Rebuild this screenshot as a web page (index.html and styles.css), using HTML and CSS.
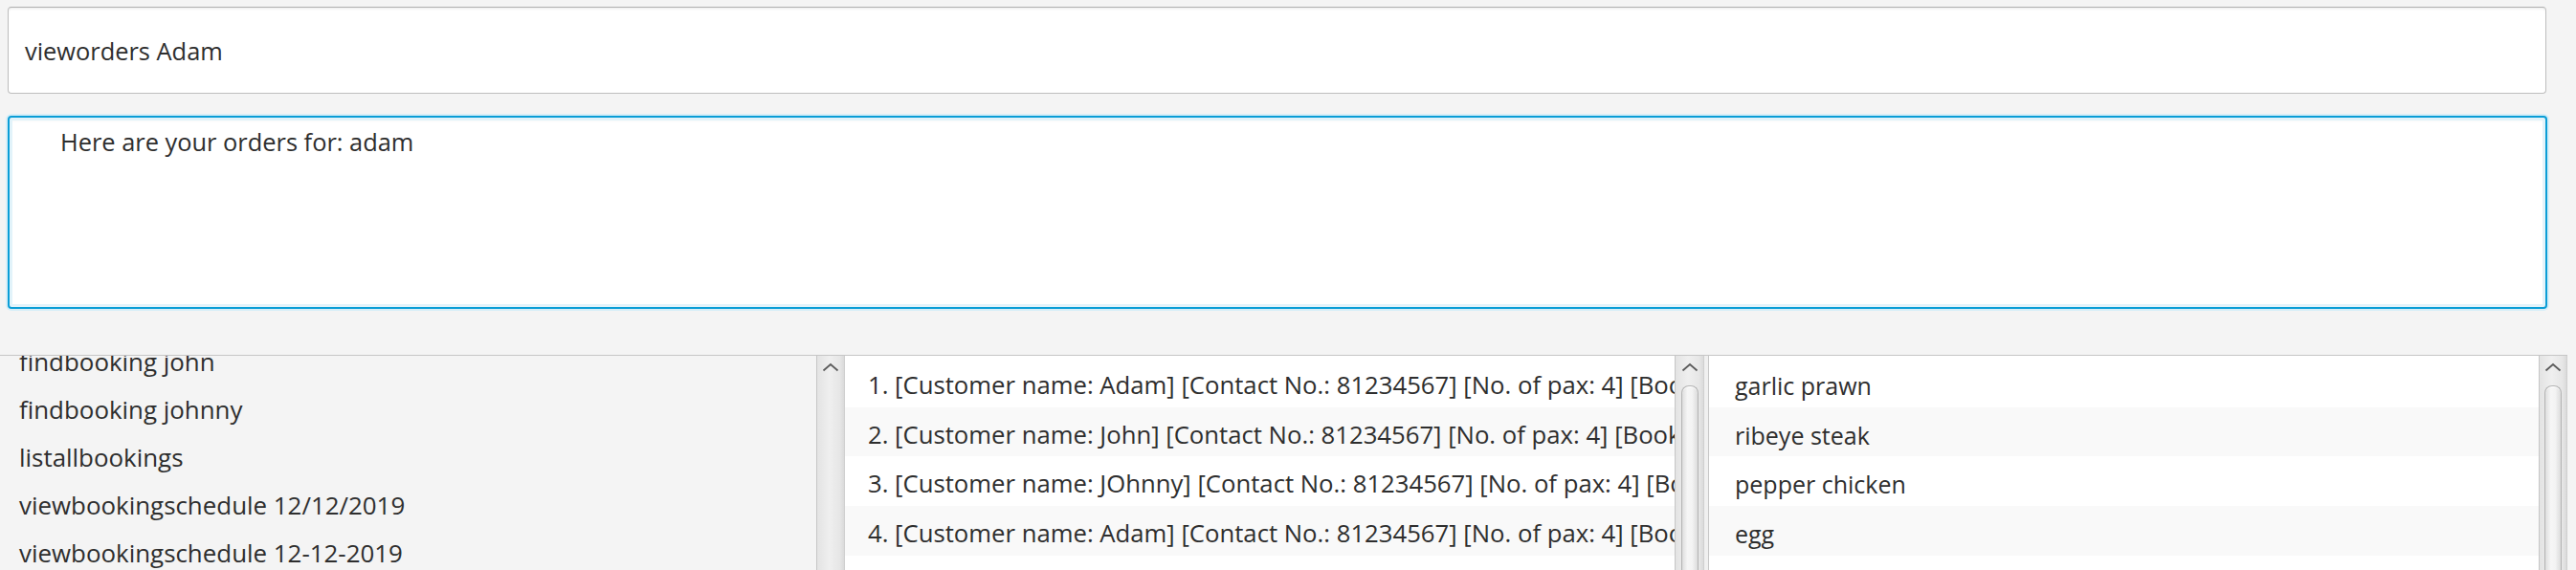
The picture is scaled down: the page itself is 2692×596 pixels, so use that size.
FILE: index.html
```html
<!DOCTYPE html>
<html lang="en">
<head>
<meta charset="utf-8">
<title>Restaurant Booking</title>
<link rel="stylesheet" href="styles.css">
</head>
<body>
<div class="app">
  <div class="command-box">vieworders Adam</div>
  <div class="result-box"><div class="result-text">Here are your orders for: adam</div></div>
</div>
<div class="panels">
  <div class="panel panel-history">
    <div class="list list-history">
      <div class="list-inner history-inner">
        <div class="row-h">findbooking john</div>
        <div class="row-h">findbooking johnny</div>
        <div class="row-h">listallbookings</div>
        <div class="row-h">viewbookingschedule 12/12/2019</div>
        <div class="row-h">viewbookingschedule 12-12-2019</div>
      </div>
    </div>
    <div class="vscroll vscroll-history">
      <svg class="chevron" width="18" height="10" viewBox="0 0 18 10"><polyline points="1.5,8.5 9,2 16.5,8.5" fill="none" stroke="#5c5c5c" stroke-width="1.8"/></svg>
    </div>
  </div>
  <div class="panel panel-orders">
    <div class="list list-white list-orders">
      <div class="list-inner">
        <div class="row">1. [Customer name: Adam] [Contact No.: 81234567] [No. of pax: 4] [Booking</div>
        <div class="row">2. [Customer name: John] [Contact No.: 81234567] [No. of pax: 4] [Booking</div>
        <div class="row">3. [Customer name: JOhnny] [Contact No.: 81234567] [No. of pax: 4] [Booking</div>
        <div class="row">4. [Customer name: Adam] [Contact No.: 81234567] [No. of pax: 4] [Booking</div>
        <div class="row"></div>
      </div>
    </div>
    <div class="vscroll vscroll-wide">
      <svg class="chevron" width="18" height="10" viewBox="0 0 18 10"><polyline points="1.5,8.5 9,2 16.5,8.5" fill="none" stroke="#5c5c5c" stroke-width="1.8"/></svg>
      <div class="thumb"></div>
    </div>
  </div>
  <div class="split-divider"></div>
  <div class="panel panel-dishes">
    <div class="list list-white list-dishes">
      <div class="list-inner">
        <div class="row">garlic prawn</div>
        <div class="row">ribeye steak</div>
        <div class="row">pepper chicken</div>
        <div class="row">egg</div>
        <div class="row"></div>
      </div>
    </div>
    <div class="vscroll vscroll-dishes">
      <svg class="chevron" width="18" height="10" viewBox="0 0 18 10"><polyline points="1.5,8.5 9,2 16.5,8.5" fill="none" stroke="#5c5c5c" stroke-width="1.8"/></svg>
      <div class="thumb"></div>
    </div>
  </div>
</div>
</body>
</html>
```

FILE: styles.css
```css
html, body {
  margin: 0;
  padding: 0;
  background: #f4f4f4;
  height: 596px;
  overflow: hidden;
}

body {
  font-family: "Open Sans", "Noto Sans", sans-serif;
  font-size: 25.4px;
  color: #2e2e2e;
}

.app {
  padding: 7px 31px 0 8px;
  display: flex;
  flex-direction: column;
  gap: 23px;
}

.command-box {
  box-sizing: border-box;
  height: 91px;
  background: #ffffff;
  border: 1px solid #bdbdbd;
  border-top-color: #b0b0b0;
  border-radius: 4px;
  box-shadow: inset 0 3px 3px -2px rgba(0, 0, 0, 0.09);
  display: flex;
  align-items: center;
  padding-left: 17px;
  white-space: nowrap;
}

.result-box {
  box-sizing: border-box;
  height: 202px;
  margin-right: -1px;
  background: #ffffff;
  border: 2px solid #0a9dd6;
  border-radius: 4px;
  box-shadow: 0 0 0 2px #d6eef8, inset 0 0 0 3px #e2f3fa, inset 0 5px 5px -3px rgba(0, 0, 0, 0.06);
  padding: 8px 0 0 53px;
}

.result-text {
  line-height: 34px;
  white-space: nowrap;
}

.panels {
  margin-top: 48px;
  width: 2683px;
  height: 224px;
  border-top: 1px solid #c6c6c6;
  display: flex;
}

.panel {
  display: flex;
  height: 100%;
}

.panel-history {
  width: 883px;
}

.panel-orders {
  width: 898px;
}

.split-divider {
  width: 4px;
  background: #f0f0f0;
}

.panel-dishes {
  width: 898px;
  border-left: 1px solid #c6c6c6;
  box-sizing: border-box;
}

.list {
  flex: 1;
  min-width: 0;
  overflow: hidden;
  white-space: nowrap;
}

.list-history {
  background: #f4f4f4;
  font-size: 25.9px;
}

.list-white {
  background: #ffffff;
  padding-top: 2px;
}

.list-orders {
  font-size: 25.7px;
}

.list-dishes {
  font-size: 25px;
}

.history-inner {
  margin-top: -19px;
}

.row-h {
  height: 50px;
  line-height: 50px;
  padding-left: 20px;
}

.row {
  box-sizing: border-box;
  height: 51.67px;
  padding-top: 7px;
  line-height: 44.67px;
  padding-left: 24px;
}

.list-dishes .row {
  padding-left: 27px;
}

.row:nth-child(even) {
  background: #f9f9f9;
}

.vscroll {
  box-sizing: border-box;
  height: 100%;
  border-left: 1px solid #c6c6c6;
  border-right: 1px solid #cfcfcf;
  background: linear-gradient(to right, #e3e3e3, #efefef 45%, #e6e6e6 85%, #dadada);
  display: flex;
  flex-direction: column;
  align-items: center;
  padding-top: 7px;
}

.vscroll-history {
  width: 30px;
}

.vscroll-wide {
  width: 31px;
}

.vscroll-dishes {
  width: 30px;
}

.chevron {
  display: block;
  flex: none;
}

.thumb {
  margin-top: 14px;
  width: 18px;
  flex: 1;
  box-sizing: border-box;
  border: 1px solid #b3b3b3;
  border-bottom: none;
  border-radius: 8px 8px 0 0;
  background: linear-gradient(to right, #dedede, #f6f6f6 35%, #f3f3f3 65%, #dcdcdc);
  box-shadow: inset 0 1px 0 #ffffff;
}
```
